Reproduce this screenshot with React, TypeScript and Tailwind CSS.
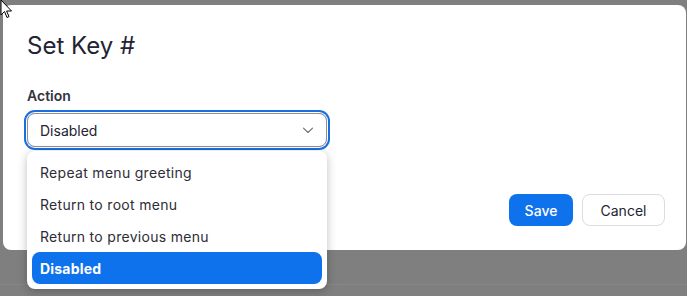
import React from "react";

const items = ["Repeat menu greeting", "Return to root menu", "Return to previous menu", "Disabled"];

export default function App() {
  return (
    <div
      className="relative w-[687px] h-[296px] overflow-hidden bg-[#7f7f7f] pt-[5px] pl-[3px]"
      style={{ fontFamily: "Inter, 'Liberation Sans', sans-serif" }}
    >
      <div className="absolute left-0 right-0 top-[284px] h-px bg-[#878787]" />
      <div className="relative w-[683px] h-[245px] bg-white rounded-lg flex flex-col pt-[25px] px-6 pb-6">
        <h1 className="text-[24px] leading-8 font-normal text-[#232333]">Set Key #</h1>
        <div className="mt-6 text-[14px] leading-5 font-semibold text-[#333340]">Action</div>
        <div className="relative mt-[7px] w-[300px]">
          <div className="h-[34px] w-full rounded-lg border border-[#8e8e96] ring-2 ring-[#1a6fe0] ring-offset-1 ring-offset-white flex items-center justify-between pl-3 pr-3">
            <span className="text-[14px] text-[#232333]">Disabled</span>
            <svg width="12" height="7" viewBox="0 0 12 7" fill="none">
              <path d="M1.5 1.2l4.5 4.3 4.5-4.3" stroke="#6e6e78" strokeWidth="1.1" strokeLinecap="round" strokeLinejoin="round" />
            </svg>
          </div>
          <div className="absolute left-0 top-[38px] w-[300px] z-10 bg-white rounded-lg shadow-[0_2px_10px_rgba(0,0,0,0.25)] p-[5px] flex flex-col">
            {items.map((t) => {
              const sel = t === "Disabled";
              return (
                <div
                  key={t}
                  className={
                    sel
                      ? "h-8 rounded-lg bg-[#0e72ed] text-white font-bold text-[14px] tracking-[0.2px] flex items-center pl-2"
                      : "h-8 rounded-lg text-[#2d2d38] text-[14px] tracking-[0.3px] flex items-center pl-2"
                  }
                >
                  {t}
                </div>
              );
            })}
          </div>
        </div>
        <div className="mt-auto flex justify-end gap-[9px] mr-[-3px]">
          <button className="h-8 w-16 rounded-lg bg-[#0e72ed] text-white text-[14px] font-medium">Save</button>
          <button className="h-8 w-[83px] rounded-lg border border-[#dcdce0] bg-white text-[#232333] text-[14px]">Cancel</button>
        </div>
      </div>
      <svg className="absolute left-0 top-0" width="14" height="20" viewBox="0 0 14 20">
        <path d="M1 0 L1 15 L4.5 11.5 L7 17.5 L9 16.6 L6.6 11 L11.5 11 Z" fill="white" stroke="black" strokeWidth="1" strokeLinejoin="round" />
      </svg>
    </div>
  );
}
